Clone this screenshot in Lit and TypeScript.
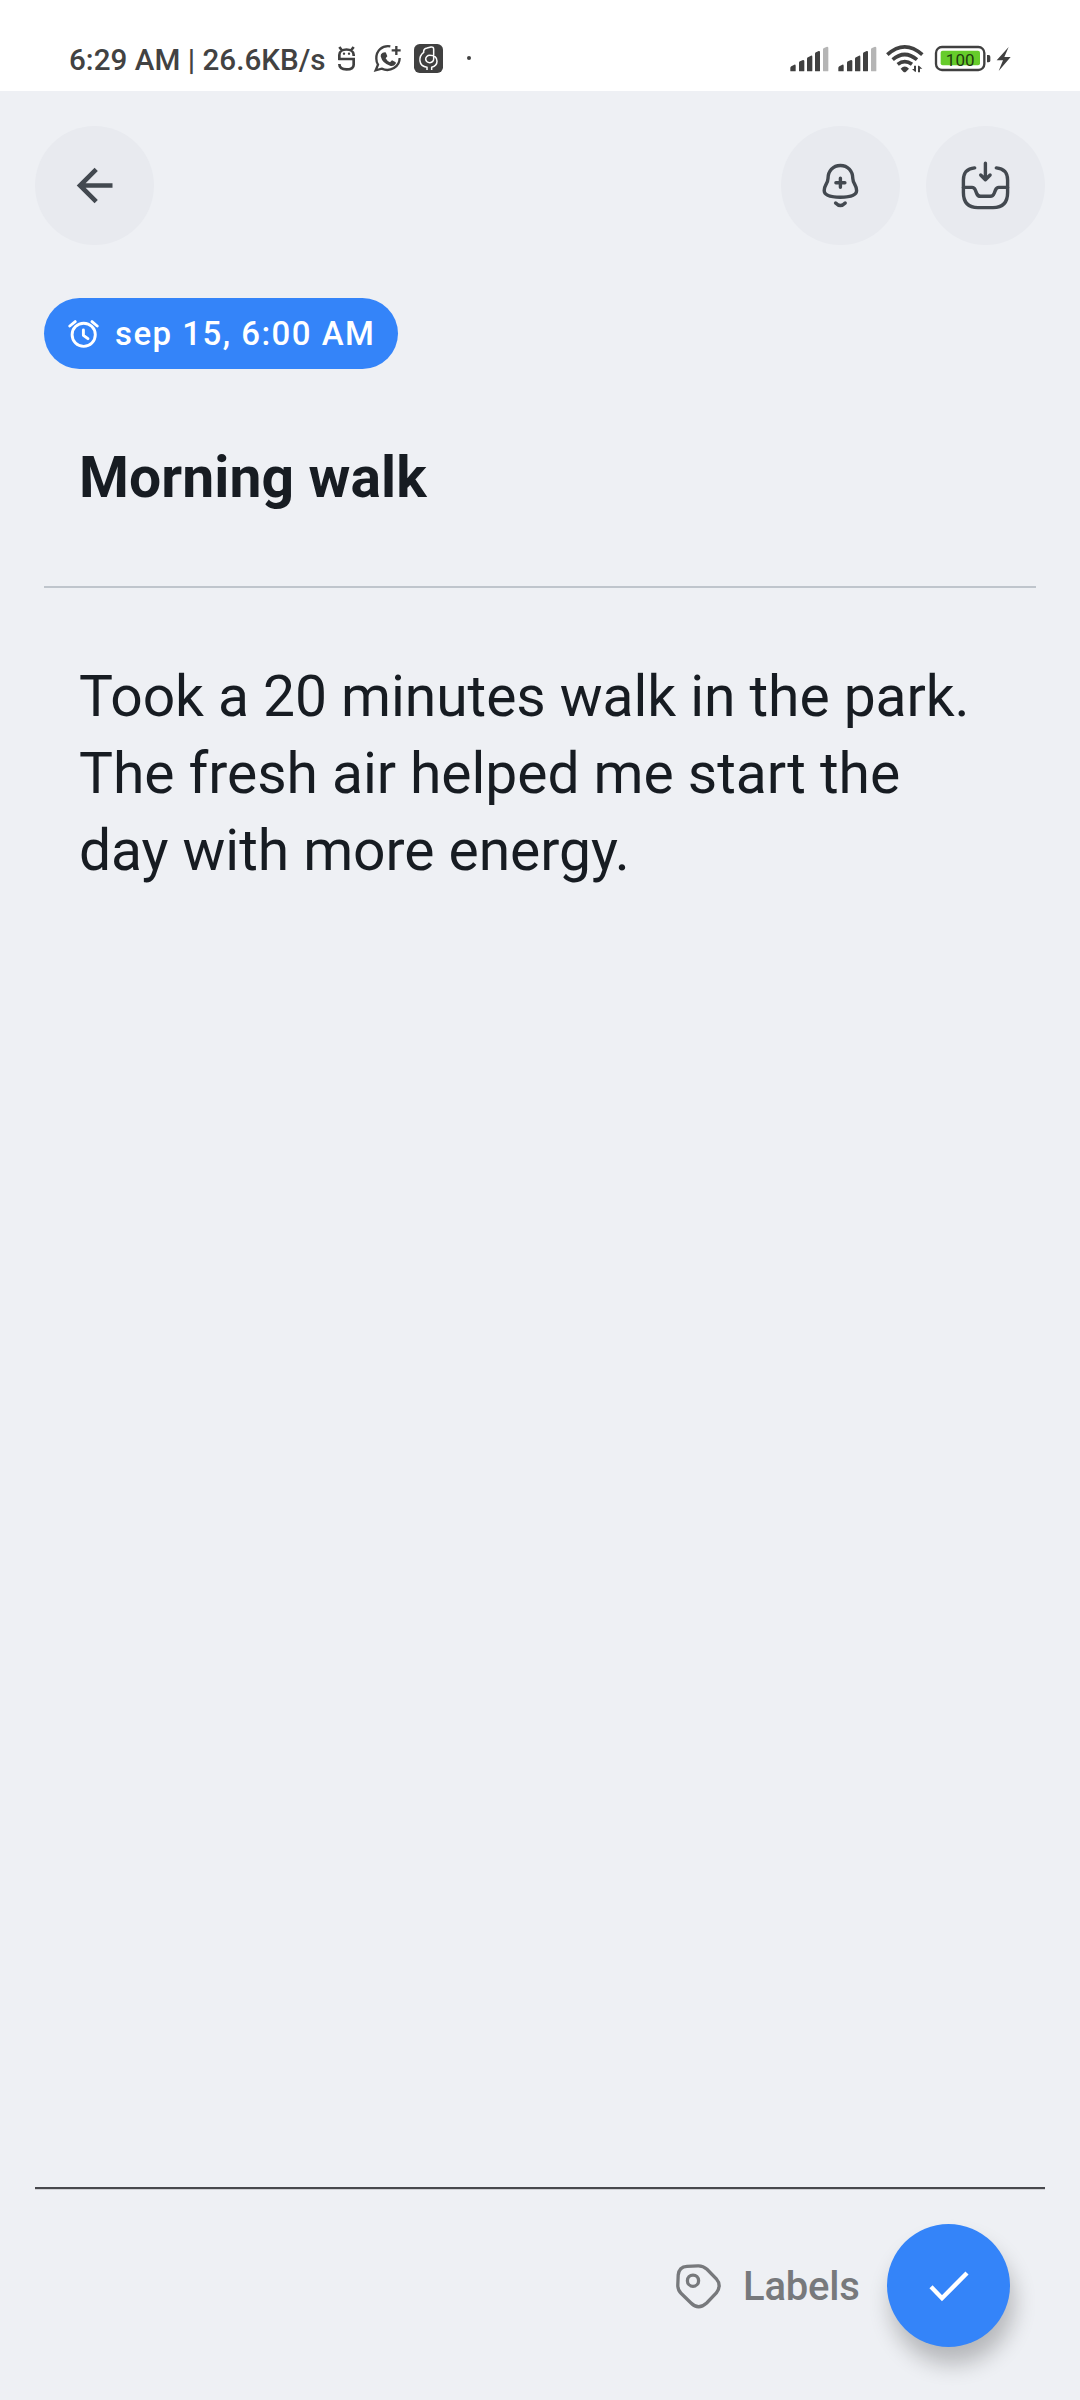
import { LitElement, html, css, svg } from "lit";
import { customElement } from "lit/decorators.js";

const signal = (x: number) => svg`
  <g transform="translate(${x} 0)">
    <path class="solid" d="M31 123v-9q0-3 3-5l9-5q4-1 4 3v16q0 1-2 1H33q-2 0-2-1z"/>
    <path class="solid" d="M57 122V98q0-3 3-4l9-4q4 0 4 3v29q0 2-2 2H59q-2 0-2-2z"/>
    <path class="solid" d="M81 122V86q0-3 3-4l9-5q4-1 4 3v42q0 2-2 2H83q-2 0-2-2z"/>
    <path class="solid" d="M105 122V71q0-3 3-4l8-4q4-1 4 3v56q0 2-2 2h-11q-2 0-2-2z"/>
    <path class="faint" d="M129 122V58q0-3 3-4l9-4q4 0 4 3v69q0 2-2 2h-12q-2 0-2-2z"/>
  </g>`;

@customElement("status-bar")
class StatusBar extends LitElement {
  static styles = css`
    :host {
      display: flex;
      align-items: flex-start;
      height: 91px;
      box-sizing: border-box;
      background: #fff;
      color: #424242;
    }
    .clock {
      width: 266px;
      margin-left: 69px;
      padding-top: 43px;
      font-size: 29.6px;
      line-height: 35px;
      font-weight: 500;
      letter-spacing: 0.03px;
      white-space: pre;
    }
    svg { display: block; flex: none; }
    .notices { width: 141px; height: 33px; margin-top: 40px; }
    .system { width: 224px; height: 32px; margin: 42px 68px 0 auto; }
    .solid { fill: #404040; }
    .faint { fill: #b5b5b5; }
    .line { fill: none; stroke: #404040; stroke-width: 7; }
    .heavy { stroke-width: 8; }
    .wave { stroke-width: 11; }
    .badge { fill: none; stroke: #fff; stroke-width: 4.5; }
    .charge { fill: #66cc2b; }
    .level { fill: #1f3a10; font: 400 51px Roboto, sans-serif; }
  `;
  render() {
    return html`
      <div class="clock">6:29 AM | 26.6KB/s</div>
      <svg class="notices" viewBox="45 30 423 99">
        <path class="line heavy" d="M58 90V75C58 53 101 53 101 75V78M58 51l7 9M101 51l-7 9"/>
        <path class="line heavy" d="M55 87H101V104Q101 118 79.5 118T58 102"/>
        <circle class="solid" cx="72" cy="71" r="3.5"/><circle class="solid" cx="87" cy="71" r="3.5"/>
        <path class="line" d="M211 49C186 45 168 63 169 86Q169 96 174 104L167 121L185 116C211 128 239 110 239 84"/>
        <path class="line" d="M229 48V75M215 61H242"/>
        <path class="solid" d="M188 68l7-1q3 0 4 4l3 8-5 6q4 8 13 12l6-6 10 5q3 2 1 5-5 9-15 7-25-7-30-29-1-7 6-11z"/>
        <rect class="solid" x="282" y="42" width="87" height="87" rx="17"/>
        <path class="badge" d="M321 120V112C294 109 295 79 311 67V63Q312 56 321 54L333 51Q341 50 341 58V86A12 11 0 1 1 329 76Q351 76 351 94Q351 108 335 112V120"/>
        <circle class="solid" cx="447" cy="84" r="6"/>
      </svg>
      <svg class="system" viewBox="24 36 672 96">
        ${signal(0)}${signal(144)}
        <path class="line wave" d="M322 74Q374 27 427 74M338 89Q374 58 411 89M353 103Q374 87 396 103"/>
        <path class="solid" d="M362 116Q374 103 387 116L378 125Q374 128 370 125z"/>
        <path class="solid" d="M402 107h6v18h-3l-9-8h6zM414 127v-20h3l10 9h-7v11z"/>
        <rect class="line" x="468" y="51" width="145" height="69" rx="18"/>
        <rect class="charge" x="482" y="62" width="118" height="44" rx="6"/>
        <text class="level" x="497" y="107" textLength="87">100</text>
        <path class="solid" d="M621 75h5q5 1 5 5v12q0 4-5 5h-5z"/>
        <path class="solid" d="M686 51L650 91H669L656 123L692 81H673z"/>
      </svg>`;
  }
}

@customElement("app-root")
class AppRoot extends LitElement {
  static styles = css`
    :host {
      display: flex;
      flex-direction: column;
      width: 1080px;
      height: 2400px;
      overflow: hidden;
      background: #eef0f4;
      color: #171c22;
      font-family: Roboto, sans-serif;
    }
    .toolbar {
      display: flex;
      gap: 26px;
      padding: 35px 35px 0;
    }
    .round {
      width: 119px;
      height: 119px;
      padding: 0;
      border: 0;
      border-radius: 50%;
      background: #e8eaef;
    }
    .back { margin-right: auto; }
    svg { display: block; flex: none; fill: none; }
    .ink { stroke: #434950; stroke-width: 3.4; stroke-linecap: round; stroke-linejoin: round; }
    .arrow { stroke: #434950; stroke-width: 4.6; }
    .chip {
      display: flex;
      align-items: center;
      align-self: flex-start;
      box-sizing: border-box;
      width: 354px;
      height: 71px;
      margin: 53px 0 0 44px;
      padding-left: 24px;
      border-radius: 36px;
      background: #3484f9;
      color: #fff;
      font-size: 33px;
      font-weight: 500;
      line-height: 39px;
      letter-spacing: 1.46px;
      white-space: nowrap;
    }
    .chip svg { width: 32px; height: 32px; margin-right: 15px; stroke: #fff; stroke-width: 2.9; stroke-linecap: round; stroke-linejoin: round; }
    h1, p { margin: 0; font-size: 57px; line-height: 77px; }
    h1 {
      margin: 0 44px;
      padding: 70px 35px;
      border-bottom: 2px solid #bfc5cc;
      font-weight: 700;
      letter-spacing: 0.1px;
    }
    p { flex: 1; padding: 70px 79px 0; white-space: pre-line; letter-spacing: -0.06px; }
    .footer {
      display: flex;
      align-items: flex-start;
      justify-content: flex-end;
      box-sizing: border-box;
      height: 213px;
      margin: 0 35px;
      padding: 35px 35px 0 0;
      border-top: 2px solid #48494d;
      box-shadow: inset 0 1px 0 #cfd0d4;
    }
    .labels {
      display: flex;
      align-items: center;
      height: 123px;
      color: #77797c;
      font-size: 40px;
      font-weight: 500;
      line-height: 48px;
    }
    .labels svg { width: 48px; height: 48px; margin-right: 21px; stroke: #77797c; stroke-width: 3.3; }
    .labels span { width: 116px; margin-right: 28px; padding-top: 2px; letter-spacing: -0.2px; }
    .done {
      width: 123px;
      height: 123px;
      padding: 0;
      border: 0;
      border-radius: 50%;
      background: #3484f9;
      box-shadow: 4px 17px 22px rgba(0, 0, 0, 0.24);
      stroke: #fff;
      stroke-width: 4.4;
    }
  `;
  render() {
    return html`
      <status-bar></status-bar>
      <div class="toolbar">
        <button class="round back" aria-label="Back">
          <svg class="arrow" viewBox="0 0 119 119"><path d="M77.5 59.5H45M61.2 43.3L45 59.5L61.2 75.7"/></svg>
        </button>
        <button class="round" aria-label="Add reminder">
          <svg class="ink" viewBox="0 0 119 119">
            <path d="M59.4 39.5C52 39.5 47.1 45 47 52.5C46.9 57.5 43.2 59 43.2 64.5C43.2 69 49 71.2 59.4 71.2S75.6 69 75.6 64.5C75.6 59 71.9 57.5 71.8 52.5C71.7 45 66.8 39.5 59.4 39.5z"/>
            <path d="M59.4 52.2V61.2M54.9 56.7H63.9M54.6 77Q59.4 82 64.2 77"/>
          </svg>
        </button>
        <button class="round" aria-label="Archive">
          <svg class="ink" viewBox="0 0 119 119">
            <path d="M48.7 41.9Q37.4 43 37.4 54V66.5Q37.4 81.6 52 81.6H67Q81.6 81.6 81.6 66.5V54Q81.6 43 70.3 41.9"/>
            <path d="M59.4 37.2V53.8M54.7 49L59.4 53.8L64.1 49"/>
            <path d="M37.4 61.4H46Q48.3 61.4 49.3 64L50.7 67.5Q51.8 70.3 54.5 70.3H64.3Q67 70.3 68.1 67.5L69.5 64Q70.5 61.4 72.8 61.4H81.6"/>
          </svg>
        </button>
      </div>
      <div class="chip">
        <svg viewBox="0 0 32 32"><circle cx="15.7" cy="16.8" r="11.6"/><path d="M15.4 12V17.3L19.9 20.7M1.8 8L7.2 3.6M24 3.6L29.2 8"/></svg>
        <span>sep 15, 6:00 AM</span>
      </div>
      <h1>Morning walk</h1>
      <p>${"Took a 20 minutes walk in the park.\nThe fresh air helped me start the\nday with more energy."}</p>
      <div class="footer">
        <div class="labels">
          <svg viewBox="0 0 48 48"><path d="M4.2 13Q5 4.7 13 4.3L24 3.9Q29 3.7 33 7.3L42.3 16.8Q48 23.5 42.3 31L32.7 41Q24.5 48.5 17 41L7 31.3Q3.7 28 3.8 23z"/><circle cx="19" cy="18.7" r="5.6"/></svg>
          <span>Labels</span>
        </div>
        <button class="done" aria-label="Save"><svg viewBox="0 0 123 123"><path d="M44 62.8L55 74.2L80 49"/></svg></button>
      </div>`;
  }
}
